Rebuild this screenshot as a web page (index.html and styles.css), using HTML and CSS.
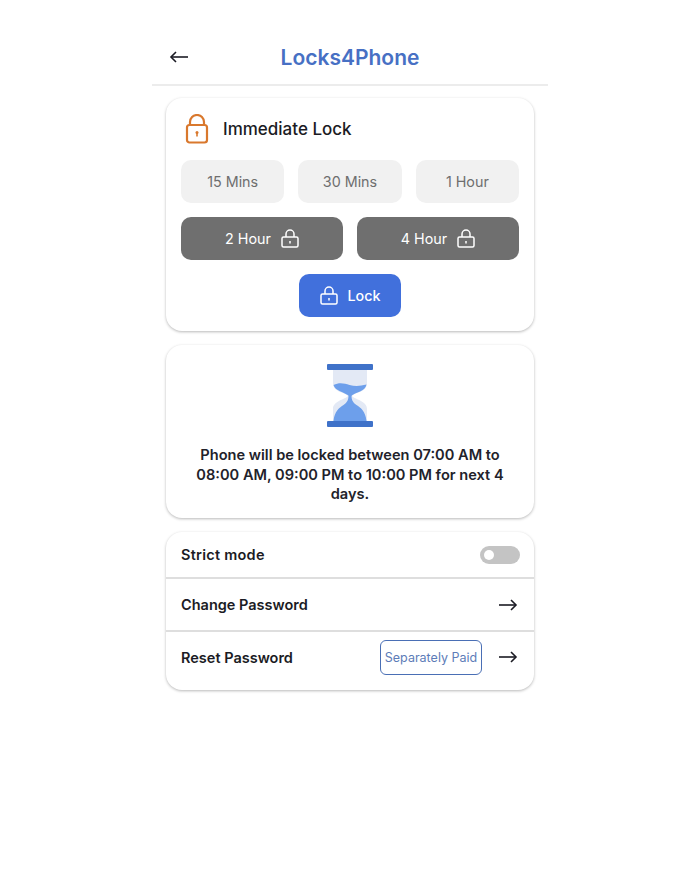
FILE: index.html
```html
<!DOCTYPE html>
<html>
<head>
    <title>Locks4Phone</title>
    <link rel="stylesheet" href="styles.css">
</head>
<body>
    <div class="phone">
        <div class="top-bar">
            <svg width="20" height="14" viewBox="0 0 20 14" fill="none" stroke="#1b1b24" stroke-width="1.6">
                <path d="M19 7H2"/>
                <path d="M7 2L2 7l5 5"/>
            </svg>
            <h1 class="app-title">Locks4Phone</h1>
        </div>

        <div class="card lock-card">
            <div class="lock-head">
                <svg width="24" height="30" viewBox="0 0 24 30" fill="none" stroke="#d9782d" stroke-width="2.2">
                    <path d="M5 11V8a7 7 0 0 1 14 0v3"/>
                    <rect x="2" y="11" width="20" height="17.5" rx="2.5"/>
                    <circle cx="12" cy="18.5" r="1.5" fill="#d9782d" stroke="none"/>
                    <path d="M12 19v3.5" stroke-width="1.6"/>
                </svg>
                <h2>Immediate Lock</h2>
            </div>
            <div class="row-three">
                <button class="time-btn">15 Mins</button>
                <button class="time-btn">30 Mins</button>
                <button class="time-btn">1 Hour</button>
            </div>
            <div class="row-two">
                <button class="time-btn locked">2 Hour
                    <svg width="18" height="19" viewBox="0 0 18 19" fill="none" stroke="#fff" stroke-width="1.5">
                        <path d="M5 8V5a4 4 0 0 1 8 0v3"/>
                        <rect x="1" y="8" width="16" height="10" rx="1.5"/>
                        <path d="M9 12v2.5"/>
                    </svg>
                </button>
                <button class="time-btn locked">4 Hour
                    <svg width="18" height="19" viewBox="0 0 18 19" fill="none" stroke="#fff" stroke-width="1.5">
                        <path d="M5 8V5a4 4 0 0 1 8 0v3"/>
                        <rect x="1" y="8" width="16" height="10" rx="1.5"/>
                        <path d="M9 12v2.5"/>
                    </svg>
                </button>
            </div>
            <button class="lock-btn">
                <svg width="18" height="19" viewBox="0 0 18 19" fill="none" stroke="#fff" stroke-width="1.5">
                    <path d="M5 8V5a4 4 0 0 1 8 0v3"/>
                    <rect x="1" y="8" width="16" height="10" rx="1.5"/>
                    <path d="M9 12v2.5"/>
                </svg>
                Lock
            </button>
        </div>

        <div class="card status-card">
            <svg width="46" height="64" viewBox="0 0 46 64">
                <path d="M6 5h34v14c0 9-11 9-15 13 4 4 15 5 15 13v13H6V45c0-8 11-9 15-13-4-4-15-4-15-13z" fill="#e3e9f5"/>
                <path d="M6.500 21c6-3 11-1.500 16 0 6 1.500 11 1 17-.5-1 7-11 7.500-15.500 11.500h-1.500C17 28 8 27 6.500 21z" fill="#6d9feb"/>
                <path d="M21.500 31h3c0 5 1 7 5 10 4 2.500 9 6 10 16H6.500c1-10 6-13.500 10-16 4-3 5-5 5-10z" fill="#6d9feb"/>
                <rect x="0" y="0" width="46" height="6" rx="1" fill="#3f72c9"/>
                <rect x="0" y="57" width="46" height="6" rx="1" fill="#3f72c9"/>
            </svg>
            <p class="status-text">Phone will be locked between 07:00 AM to 08:00 AM, 09:00 PM to 10:00 PM for next 4 days.</p>
        </div>

        <div class="card settings-card">
            <div class="setting-row strict-row">
                <span>Strict mode</span>
                <div class="toggle"><div class="toggle-knob"></div></div>
            </div>
            <div class="setting-row change-row">
                <span>Change Password</span>
                <svg width="20" height="14" viewBox="0 0 20 14" fill="none" stroke="#1b1b24" stroke-width="1.6">
                    <path d="M1 7h17"/>
                    <path d="M13 2l5 5-5 5"/>
                </svg>
            </div>
            <div class="setting-row reset-row">
                <span>Reset Password</span>
                <div class="reset-right">
                    <div class="paid-tag">Separately Paid</div>
                    <svg width="20" height="14" viewBox="0 0 20 14" fill="none" stroke="#1b1b24" stroke-width="1.6">
                        <path d="M1 7h17"/>
                        <path d="M13 2l5 5-5 5"/>
                    </svg>
                </div>
            </div>
        </div>
    </div>
</body>
</html>
```

FILE: styles.css
```css
body {
    margin: 0;
    background: #fff;
    font-family: Inter, "Open Sans", sans-serif;
    color: #1b1b24;
}

.phone {
    width: 396px;
    margin: 0 auto;
}

.top-bar {
    height: 86px;
    padding: 30px 17px 0;
    box-sizing: border-box;
    display: grid;
    grid-template-columns: 1fr auto 1fr;
    align-items: center;
    border-bottom: 2px solid #ececec;
    margin-bottom: 12px;
}

.app-title {
    margin: 2px 0 0;
    font-size: 21px;
    line-height: 28px;
    font-weight: 600;
    color: #4770c4;
}

.card {
    width: 368px;
    box-sizing: border-box;
    margin: 0 14px 14px;
    background: #fff;
    border-radius: 16px;
    box-shadow: 0 1px 3px rgba(0,0,0,0.28);
}

.lock-card {
    height: 233px;
    padding: 15px 15px 0;
}

.lock-head {
    height: 32px;
    display: flex;
    align-items: center;
    gap: 14px;
    padding-left: 4px;
    margin-bottom: 15px;
}

.lock-head h2 {
    margin: 0;
    font-size: 17px;
    font-weight: 500;
}

.row-three {
    display: grid;
    grid-template-columns: repeat(3, 1fr);
    gap: 14px;
    margin-bottom: 14.5px;
}

.row-two {
    display: grid;
    grid-template-columns: repeat(2, 1fr);
    gap: 14px;
    margin-bottom: 14.5px;
}

button {
    border: none;
    font-family: inherit;
    font-size: 14.3px;
    height: 42.5px;
    border-radius: 10px;
}

.time-btn {
    background: #f1f1f1;
    color: #6e6e6e;
}

.time-btn.locked {
    background: #6f6f6f;
    color: #fff;
    display: flex;
    align-items: center;
    justify-content: center;
    gap: 10px;
}

.lock-btn {
    display: flex;
    align-items: center;
    justify-content: center;
    gap: 10px;
    width: 102px;
    margin: 0 auto;
    background: #4170dc;
    color: #fff;
    font-weight: 500;
}

.status-card {
    height: 173px;
    padding-top: 19px;
    text-align: center;
}

.status-card svg {
    display: block;
    margin: 0 auto;
}

.status-text {
    margin: 18px 14px 0;
    font-size: 14.6px;
    line-height: 19.5px;
    font-weight: 600;
    color: #22222a;
}

.settings-card {
    height: 158px;
}

.setting-row {
    display: flex;
    align-items: center;
    justify-content: space-between;
    padding: 0 16px 0 15px;
    font-size: 14.5px;
    font-weight: 600;
    box-sizing: border-box;
}

.strict-row {
    height: 47px;
    border-bottom: 2px solid #dedede;
    padding-right: 14px;
    letter-spacing: 0.25px;
}

.change-row {
    height: 53px;
    border-bottom: 2px solid #dedede;
}

.reset-row {
    height: 58px;
    padding-bottom: 8px;
}

.reset-right {
    display: flex;
    align-items: center;
    gap: 16px;
}

.toggle {
    width: 40px;
    height: 18px;
    border-radius: 9px;
    background: #c4c4c4;
    display: flex;
    align-items: center;
    padding-left: 4px;
    box-sizing: border-box;
}

.toggle-knob {
    width: 10px;
    height: 10px;
    border-radius: 50%;
    background: #fff;
}

.paid-tag {
    width: 102px;
    height: 35px;
    box-sizing: border-box;
    border: 1.5px solid #4a6fb5;
    border-radius: 6px;
    display: flex;
    align-items: center;
    justify-content: center;
    font-size: 12.5px;
    font-weight: 400;
    color: #5d7cb8;
}
```
